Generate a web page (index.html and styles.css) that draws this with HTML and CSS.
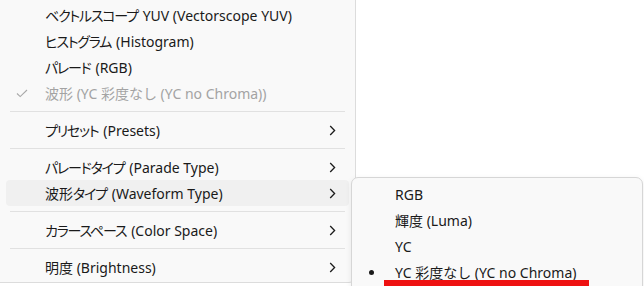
FILE: index.html
```html
<!DOCTYPE html>
<html lang="ja">
<head>
  <meta charset="UTF-8">
  <title>Scope Menu</title>
  <link rel="stylesheet" href="styles.css">
</head>
<body>
  <div class="menu">
    <div class="item"><span><span class="kana">ベクトルスコープ</span> YUV (Vectorscope YUV)</span></div>
    <div class="item"><span><span class="kana">ヒストグラム</span> (Histogram)</span></div>
    <div class="item"><span><span class="kana">パレード</span> (RGB)</span></div>
    <div class="item disabled">
      <svg class="check" width="12" height="9" viewBox="0 0 12 9"><path d="M1 4.5 L4.2 7.6 L11 1" fill="none" stroke="#a8a8a8" stroke-width="1.1"/></svg>
      <span>波形 (YC 彩度なし (YC no Chroma))</span>
    </div>
    <div class="sep"></div>
    <div class="item sub"><span><span class="kana">プリセット</span> (Presets)</span><svg class="chev" width="7" height="11" viewBox="0 0 7 11"><path d="M1.2 1 L5.6 5.5 L1.2 10" fill="none" stroke="#1c1c1c" stroke-width="1.3"/></svg></div>
    <div class="sep"></div>
    <div class="item sub"><span><span class="kana">パレードタイプ</span> (Parade Type)</span><svg class="chev" width="7" height="11" viewBox="0 0 7 11"><path d="M1.2 1 L5.6 5.5 L1.2 10" fill="none" stroke="#1c1c1c" stroke-width="1.3"/></svg></div>
    <div class="item sub active"><span>波形<span class="kana">タイプ</span> (Waveform Type)</span><svg class="chev" width="7" height="11" viewBox="0 0 7 11"><path d="M1.2 1 L5.6 5.5 L1.2 10" fill="none" stroke="#1c1c1c" stroke-width="1.3"/></svg></div>
    <div class="sep"></div>
    <div class="item sub"><span><span class="kana">カラースペース</span> (Color Space)</span><svg class="chev" width="7" height="11" viewBox="0 0 7 11"><path d="M1.2 1 L5.6 5.5 L1.2 10" fill="none" stroke="#1c1c1c" stroke-width="1.3"/></svg></div>
    <div class="sep"></div>
    <div class="item sub"><span>明度 (Brightness)</span><svg class="chev" width="7" height="11" viewBox="0 0 7 11"><path d="M1.2 1 L5.6 5.5 L1.2 10" fill="none" stroke="#1c1c1c" stroke-width="1.3"/></svg></div>
  </div>

  <div class="submenu">
    <div class="item"><span>RGB</span></div>
    <div class="item"><span>輝度 (Luma)</span></div>
    <div class="item"><span>YC</span></div>
    <div class="item"><span class="dot"></span><span>YC 彩度なし (YC no Chroma)</span></div>
  </div>

  <div class="mark"></div>
</body>
</html>
```

FILE: styles.css
```css
body {
  margin: 0;
  background-color: #fff;
  font-family: "Noto Sans", "Noto Sans CJK JP", sans-serif;
  font-size: 14px;
  color: #1a1a1a;
  overflow: hidden;
}

.kana {
  font-feature-settings: "palt";
  letter-spacing: -1.2px;
  margin-right: 1.2px;
}

.menu {
  width: 355px;
  padding: 2px 0;
  background-color: #f9f9f9;
  border-right: 1px solid #dcdcdc;
  border-bottom: 1px solid #dcdcdc;
  border-bottom-right-radius: 7px;
}

.item {
  position: relative;
  display: flex;
  align-items: center;
  height: 26px;
  margin: 0 6px;
  padding-left: 39px;
  padding-right: 13px;
  border-radius: 4px;
  white-space: nowrap;
}

.item.sub {
  justify-content: space-between;
}

.item.active {
  background-color: #f0f0f0;
}

.item.disabled {
  color: #a3a3a3;
}

.check {
  position: absolute;
  left: 10px;
  top: 9px;
}

.sep {
  height: 1px;
  margin: 5px 10px;
  background-color: #e1e1e1;
}

.submenu {
  position: absolute;
  left: 351px;
  top: 177px;
  width: 290px;
  height: 112px;
  padding-top: 3px;
  background-color: #f9f9f9;
  border: 1px solid #d6d6d6;
  border-radius: 7px;
  box-shadow: 0 2px 6px rgba(0, 0, 0, 0.08);
}

.submenu .item {
  margin: 0 4px;
  padding-left: 39px;
}

.dot {
  position: absolute;
  left: 13px;
  top: 11px;
  width: 5px;
  height: 5px;
  border-radius: 50%;
  background-color: #1a1a1a;
}

.mark {
  position: absolute;
  left: 384px;
  top: 280px;
  width: 205px;
  height: 6px;
  background-color: #ee1111;
}
```
